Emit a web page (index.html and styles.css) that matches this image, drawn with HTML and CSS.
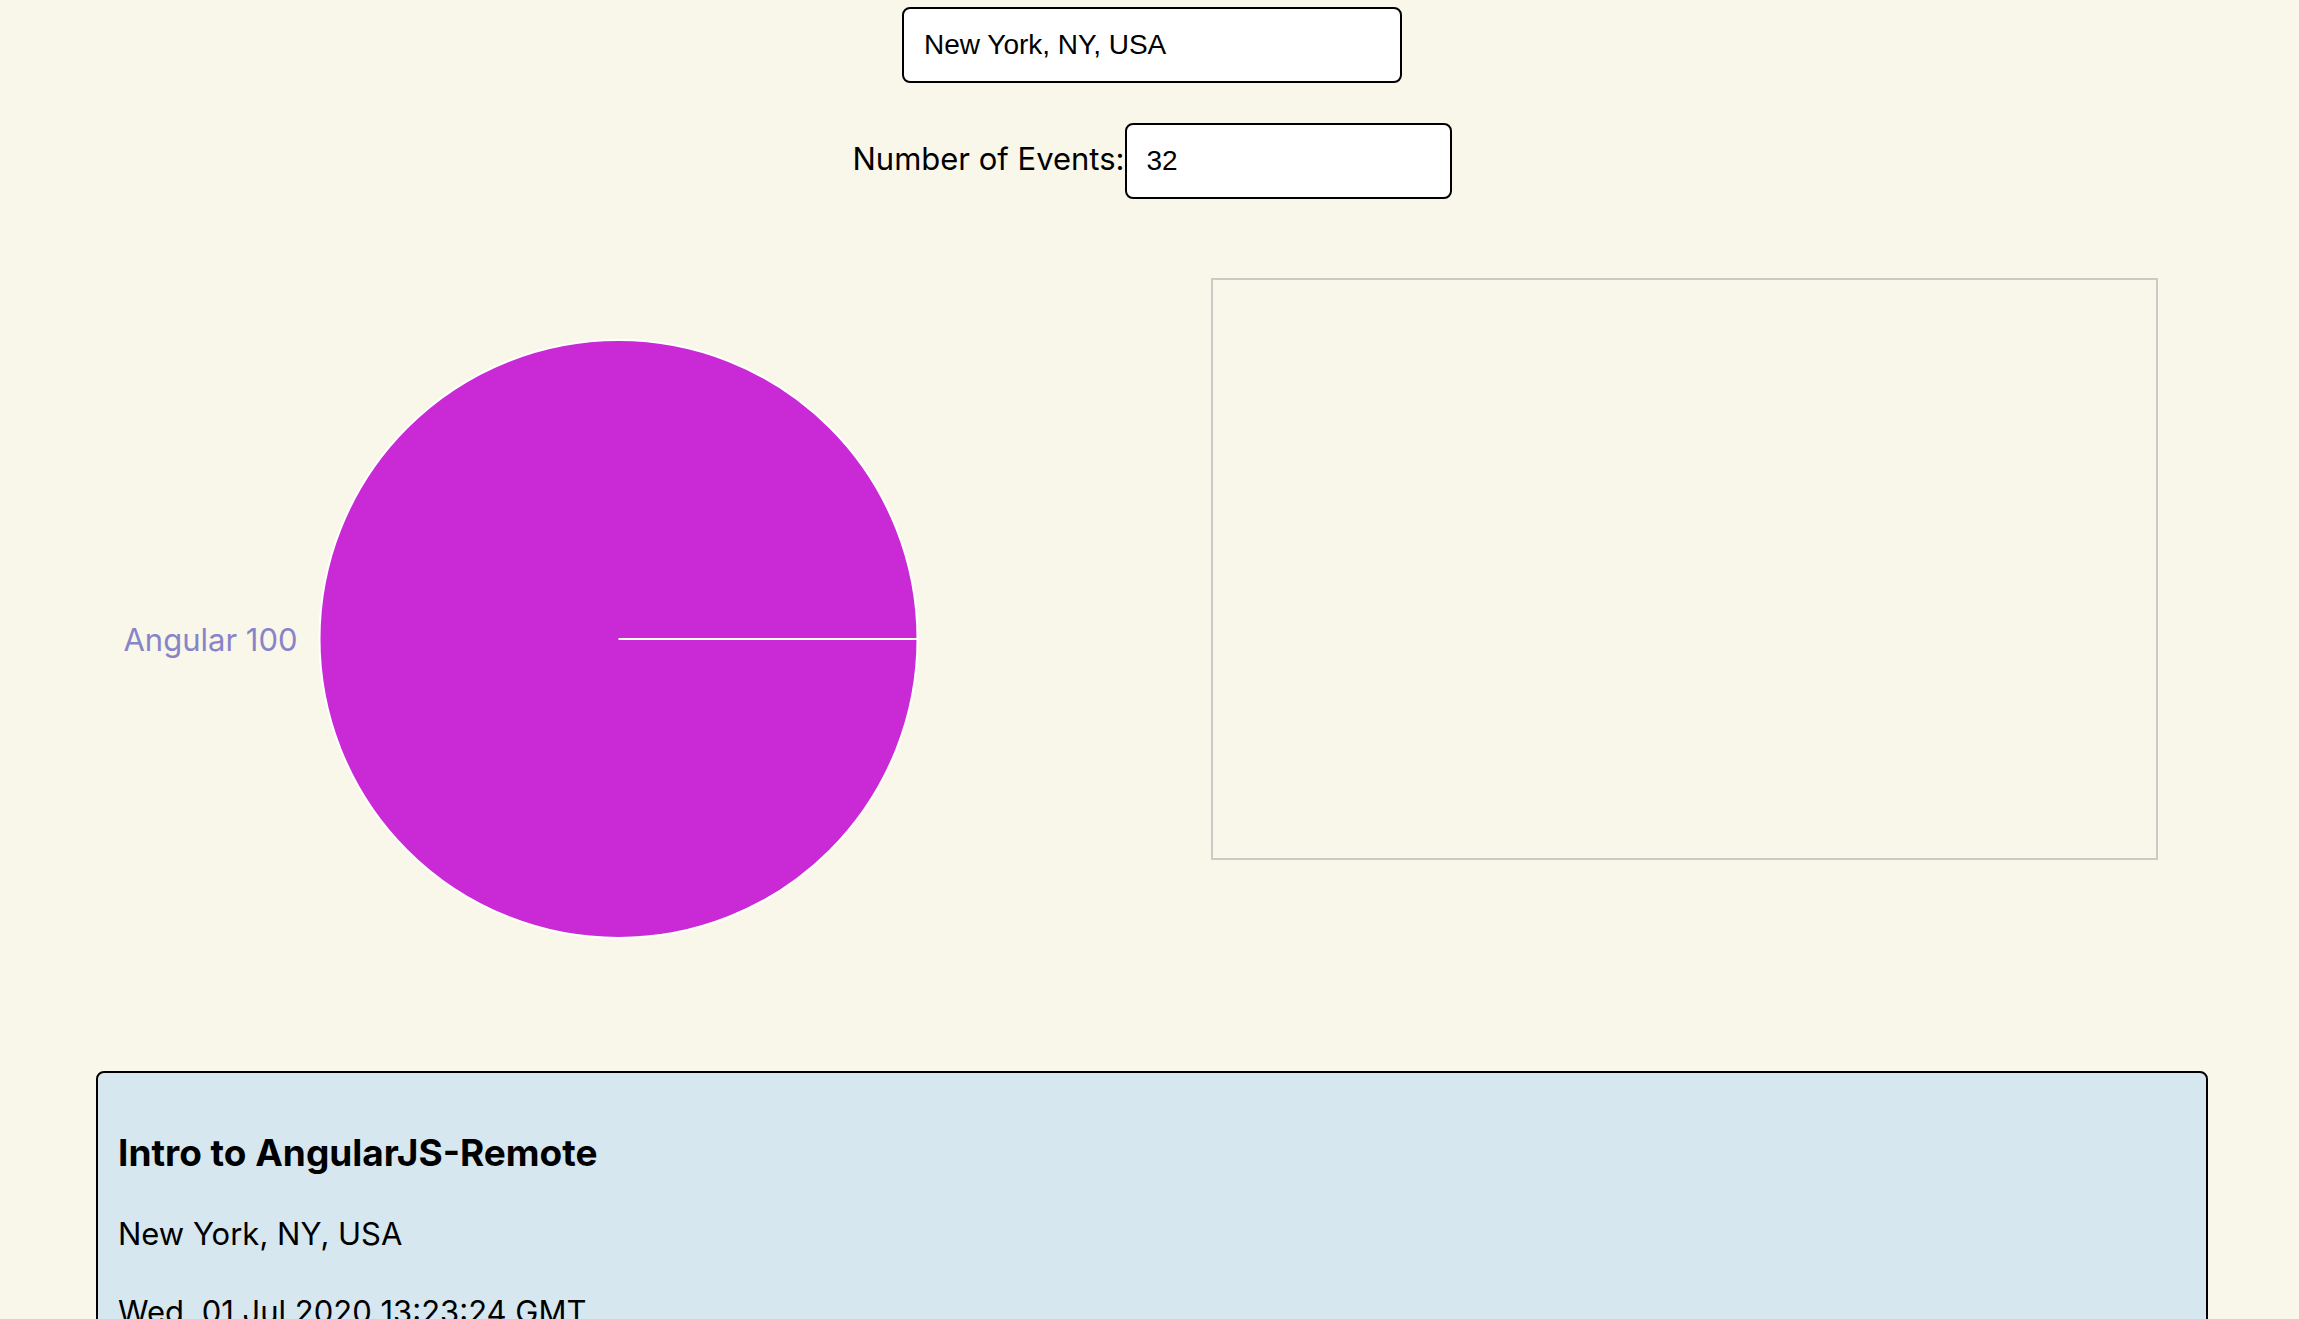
FILE: index.html
```html
<!DOCTYPE html>
<html lang="en">
<head>
<meta charset="utf-8">
<title>Meet</title>
<link rel="stylesheet" href="styles.css">
</head>
<body>
<main class="app">
  <div class="city-search">
    <input class="field field-city" type="text" aria-label="City" value="New York, NY, USA">
  </div>
  <div class="event-count">
    <label for="count">Number of Events:</label>
    <input class="field field-count" id="count" type="text" value="32">
  </div>
  <section class="charts">
    <svg class="pie" role="img" aria-label="Events by genre">
      <svg class="pie-center" x="50%" y="50%">
        <circle class="slice" r="299"/>
        <path class="slice-edge" d="M0 0H299"/>
        <text class="slice-label" x="-321" y="12">Angular 100</text>
      </svg>
    </svg>
    <div class="scatter"></div>
  </section>
  <ul class="events">
    <li class="event">
      <h2 class="event-title">Intro to AngularJS-Remote</h2>
      <p class="event-text">New York, NY, USA</p>
      <p class="event-text">Wed, 01 Jul 2020 13:23:24 GMT</p>
    </li>
  </ul>
</main>
</body>
</html>
```
FILE: styles.css
```css
* {
  box-sizing: border-box;
}

html {
  scrollbar-width: none;
}

body {
  margin: 0;
  background: #f9f7ea;
  color: #000;
  font-family: Inter, "Liberation Sans", sans-serif;
  font-size: 31px;
  line-height: 38px;
}

.app {
  padding: 7px 91px 0 96px;
}

.city-search,
.event-count {
  display: flex;
  justify-content: center;
  align-items: baseline;
  margin-bottom: 40px;
}

.field {
  height: 76px;
  padding: 0 20px;
  border: 2px solid #000;
  border-radius: 8px;
  background: #fff;
  color: #000;
  font-family: "Liberation Sans", sans-serif;
  font-size: 28px;
}

.field-city {
  width: 500px;
}

.field-count {
  width: 327px;
}

.charts {
  display: grid;
  grid-template-columns: 1fr 1fr;
  column-gap: 22px;
}

.pie {
  width: 100%;
  height: 800px;
}

.pie-center {
  overflow: visible;
}

.slice {
  fill: #c92ad6;
  stroke: #fff;
  stroke-width: 2px;
}

.slice-edge {
  stroke: #fff;
  stroke-width: 2px;
}

.slice-label {
  fill: #8884c8;
  text-anchor: end;
}

.scatter {
  height: 582px;
  margin: 39px 50px 0 48px;
  border: 2px solid #cbcac4;
}

.events {
  margin: 32px 0;
  padding: 0;
  list-style: none;
}

.event {
  padding: 58px 20px;
  border: 2px solid #000;
  border-radius: 8px;
  background: #d6e7f0;
}

.event-title {
  margin: 0;
  font-size: 37px;
  line-height: 44px;
}

.event-text {
  margin: 40px 0 0;
}
```
